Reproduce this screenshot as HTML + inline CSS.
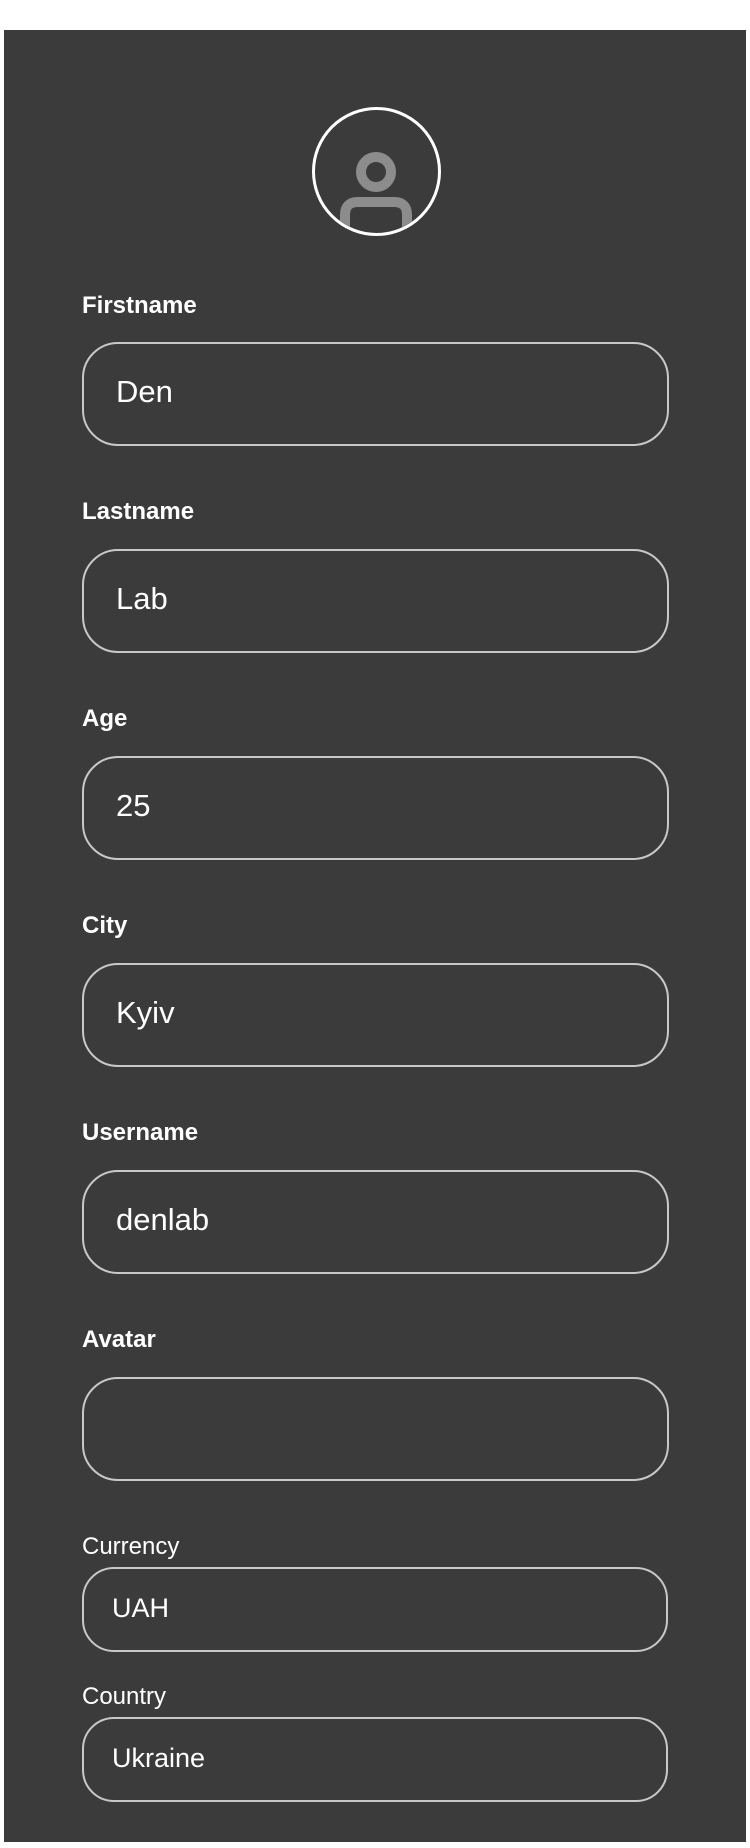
<!DOCTYPE html>
<html><head><meta charset="utf-8"><style>
html,body{margin:0;padding:0;width:750px;height:1848px;background:#fff;overflow:hidden;font-family:"Liberation Sans",sans-serif}
.panel{position:absolute;left:4px;top:30px;width:742px;height:1812px;background:#3b3b3b}
.av{position:absolute;left:312px;top:107px;width:123px;height:123px;border:3px solid #fff;border-radius:50%;overflow:hidden}
.lbl{position:absolute;left:82px;color:#fff;font-weight:bold;font-size:24px}
.lbl2{position:absolute;left:82px;color:#fff;font-size:24px}
.in{position:absolute;left:82px;height:100px;border:2px solid #c8c8c8;border-radius:36px;color:#fff;font-size:31px;line-height:96px;padding-left:32px;width:551px}
.in2{position:absolute;left:82px;width:554px;height:81px;border:2px solid #c8c8c8;border-radius:32px;color:#fff;font-size:27px;line-height:79px;padding-left:28px}
</style></head><body>
<div class="panel"></div>
<div class="av"><svg width="123" height="123" viewBox="0 0 123 123">
<circle cx="61" cy="62" r="15" fill="none" stroke="#8c8c8c" stroke-width="10"/>
<path d="M30 127 V105 Q30 92 43 92 H79 Q92 92 92 105 V127" fill="none" stroke="#8c8c8c" stroke-width="10"/>
</svg></div>
<div class="lbl" style="top:292px">Firstname</div>
<div class="in" style="top:342px">Den</div>
<div class="lbl" style="top:498px">Lastname</div>
<div class="in" style="top:549px">Lab</div>
<div class="lbl" style="top:705px">Age</div>
<div class="in" style="top:756px">25</div>
<div class="lbl" style="top:912px">City</div>
<div class="in" style="top:963px">Kyiv</div>
<div class="lbl" style="top:1119px">Username</div>
<div class="in" style="top:1170px">denlab</div>
<div class="lbl" style="top:1326px">Avatar</div>
<div class="in" style="top:1377px"></div>
<div class="lbl2" style="top:1533px">Currency</div>
<div class="in2" style="top:1567px">UAH</div>
<div class="lbl2" style="top:1683px">Country</div>
<div class="in2" style="top:1717px">Ukraine</div>
</body></html>
